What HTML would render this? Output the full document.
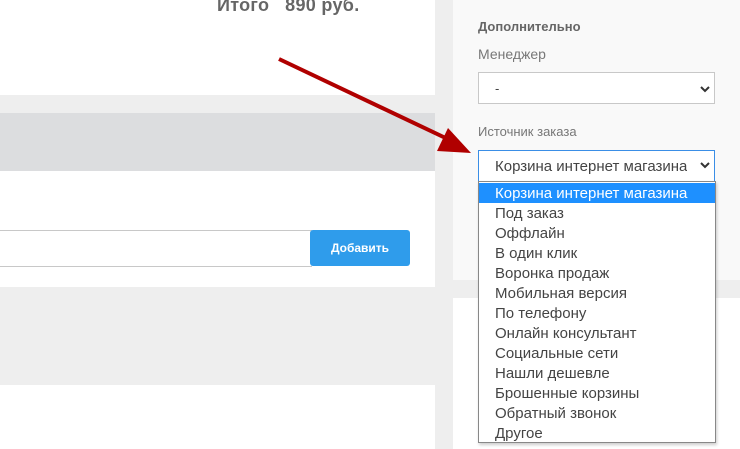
<!DOCTYPE html>
<html><head><meta charset="utf-8"><style>
*{margin:0;padding:0;box-sizing:border-box}
body{width:740px;height:449px;overflow:hidden;position:relative;background:#eeeeee;font-family:"Liberation Sans","DejaVu Sans",sans-serif;color:#555}
.a{position:absolute}
.dd div{height:20px;line-height:21px;padding-left:16px;font-size:15px;color:#444;white-space:nowrap}
</style></head><body>
<div class="a" style="left:0;top:0;width:435px;height:95px;background:#fff"></div>
<div class="a" style="left:217px;top:-5px;font-size:18px;font-weight:bold;color:#666;letter-spacing:0.3px">Итого&nbsp;&nbsp;&nbsp;890 руб.</div>
<div class="a" style="left:0;top:113px;width:435px;height:58px;background:#dcdddf"></div>
<div class="a" style="left:0;top:171px;width:435px;height:116px;background:#fff"></div>
<div class="a" style="left:0;top:230px;width:312px;height:37px;border-top:1px solid #c8c8c8;border-bottom:1px solid #c8c8c8;background:#fff"></div>
<div class="a" style="left:310px;top:230px;width:100px;height:36px;background:#2f9ceb;border-radius:3px;color:#fff;font-size:12px;font-weight:bold;text-align:center;line-height:36px">Добавить</div>
<div class="a" style="left:0;top:385px;width:435px;height:64px;background:#fff"></div>
<div class="a" style="left:453px;top:0;width:287px;height:280px;background:#f9f9f9"></div>
<div class="a" style="left:453px;top:298px;width:287px;height:151px;background:#fff"></div>
<div class="a" style="left:478px;top:19px;font-size:13px;font-weight:bold;color:#666">Дополнительно</div>
<div class="a" style="left:478px;top:46px;font-size:14px;color:#777">Менеджер</div>
<div class="a" style="left:478px;top:72px;width:237px;height:32px;border:1px solid #c8c8c8;background:#fff;font-size:13px;line-height:32px;padding-left:16px;color:#444">-</div>
<div class="a" style="left:478px;top:124px;font-size:13px;color:#777">Источник заказа</div>
<div class="a" style="left:478px;top:150px;width:237px;height:32px;border:1px solid #3a8ee6;background:#fff;font-size:15px;line-height:32px;padding-left:16px;color:#444;white-space:nowrap;overflow:hidden">Корзина интернет магазина</div>
<div class="a" style="left:687px;top:151px;width:27px;height:30px;background:#fff"></div>
<svg class="a" style="left:699px;top:160px" width="12" height="10"><path d="M2 3 L6 7 L10 3" stroke="#333" stroke-width="2" fill="none"/></svg>
<svg class="a" style="left:699px;top:84px" width="12" height="10"><path d="M2 3 L6 7 L10 3" stroke="#333" stroke-width="2" fill="none"/></svg>
<div class="a dd" style="left:478px;top:181px;width:238px;height:262px;border:1px solid #888;background:#fff;box-shadow:1px 2px 3px rgba(0,0,0,.2);padding-top:1px">
<div style="background:#1e90ff;color:#fff">Корзина интернет магазина</div>
<div>Под заказ</div><div>Оффлайн</div><div>В один клик</div><div>Воронка продаж</div><div>Мобильная версия</div><div>По телефону</div><div>Онлайн консультант</div><div>Социальные сети</div><div>Нашли дешевле</div><div>Брошенные корзины</div><div>Обратный звонок</div><div>Другое</div>
</div>
<svg class="a" style="left:0;top:0" width="740" height="449"><path d="M279 59 L454 142" stroke="#b00000" stroke-width="4"/><path d="M448 128 L471 153 L437 151 Z" fill="#b00000"/></svg>
</body></html>
